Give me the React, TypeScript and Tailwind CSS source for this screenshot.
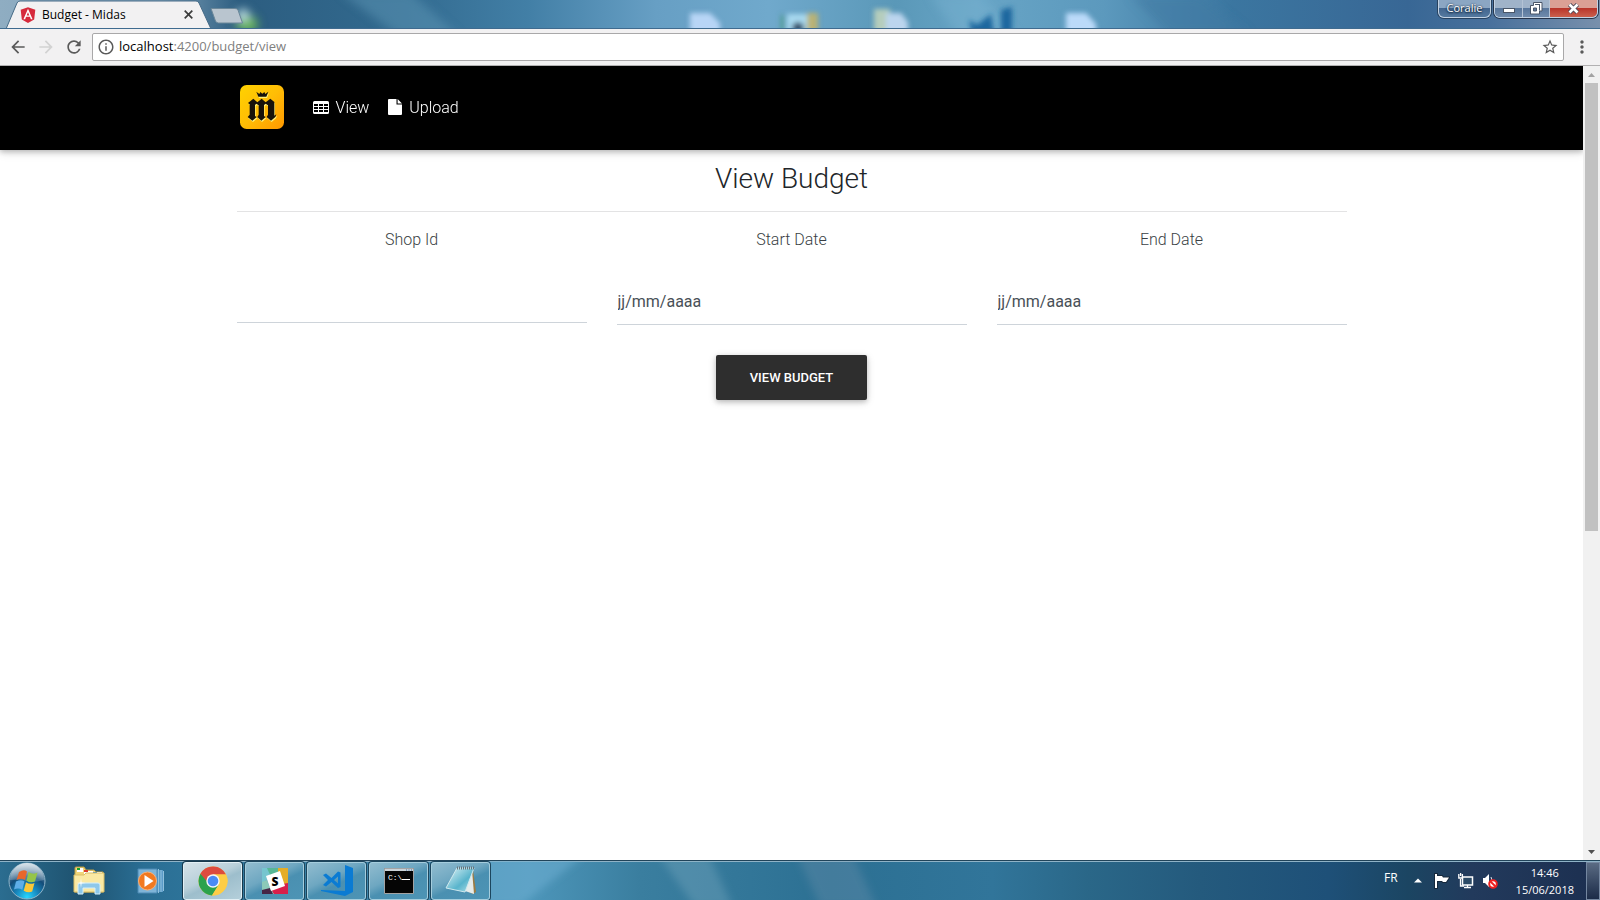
import type { ReactNode } from "react";
import {
  MdArrowBack,
  MdArrowForward,
  MdInfoOutline,
  MdMoreVert,
  MdRefresh,
  MdStarBorder,
} from "react-icons/md";
import { FaAngular } from "react-icons/fa";

const segoe = "font-['Open_Sans','Noto_Sans',sans-serif]";

function DesktopIcons() {
  return (
    <svg
      className="pointer-events-none absolute inset-0 h-full w-full"
      viewBox="0 0 1600 29"
      preserveAspectRatio="xMidYMin slice"
      aria-hidden="true"
    >
      <defs>
        <filter id="soft" x="-20%" y="-60%" width="140%" height="220%">
          <feGaussianBlur stdDeviation="2.4" />
        </filter>
        <filter id="softer" x="-50%" y="-50%" width="200%" height="200%">
          <feGaussianBlur stdDeviation="5" />
        </filter>
      </defs>
      <g filter="url(#softer)">
        <path d="M340 -8l60 45h60L410-8z" fill="#5d95b6" opacity=".5" />
        <path d="M930 -5l28 40h60L980-5z" fill="#7db6d4" opacity=".35" />
        <path d="M1130-5l40 40h80l-50-40z" fill="#3f7ba3" opacity=".6" />
        <ellipse cx="247" cy="24" rx="11" ry="9" fill="#69b45c" />
        <ellipse cx="243" cy="15" rx="6" ry="6" fill="#c9e8ea" />
      </g>
      <g filter="url(#soft)">
        <path d="M690 13h20l10 10v12h-30z" fill="#b8d5f6" />
        <path d="M787 14h20v20h-20z" fill="#a8d9ef" />
        <path d="M807 13h11v20h-11z" fill="#b9b274" />
        <circle cx="798" cy="28" r="6" fill="#39536d" />
        <path d="M781 15h3v18h-3z" fill="#4c9a86" />
        <path d="M874 9h16v25h-16z" fill="#b5cdbc" />
        <path d="M886 13h15l7 9v14h-22z" fill="#bcd5ee" />
        <path d="M1001 10l11-3v27h-11zM969 20l8 5 14-11 3 20h-22z" fill="#1d679f" />
        <path d="M1066 13h20l10 11v12h-30z" fill="#bbdaf9" />
      </g>
    </svg>
  );
}

function TitleBar() {
  return (
    <header
      className={`relative flex h-[29px] shrink-0 items-start overflow-hidden border-b border-[#3f6b8f] bg-[linear-gradient(90deg,#8fadc2_0%,#7d9fb8_10%,#2c5d80_15%,#326a8f_25%,#427fa6_33%,#679fc4_41%,#70a9cc_48%,#5a98b8_56%,#68a5c6_61%,#5c99bd_69%,#3b76a0_77%,#386795_88%,#48709c_93%,#7890ac_100%)] ${segoe}`}
    >
      <DesktopIcons />
      <div className="relative ml-1.5 h-[29px] w-[206px] shrink-0">
        <svg className="absolute inset-0 h-full w-full" viewBox="0 0 206 29" aria-hidden="true">
          <path
            d="M0 29 11 3Q12 1 14 1H190Q192 1 193 3L205 29Z"
            fill="#f2f1f2"
            stroke="#466b87"
            strokeWidth="1"
          />
          <path d="M0 28h206v1H0z" fill="#f2f1f2" />
        </svg>
        <div className="relative flex h-[29px] items-center pl-3.5 pr-4">
          <span className="relative flex h-4 w-4 items-center justify-center">
            <span className="absolute h-2.5 w-2 bg-white" />
            <FaAngular className="relative h-[18px] w-[18px] shrink-0 text-[#d6293b]" />
          </span>
          <span className="ml-1.5 flex-1 text-xs text-black">Budget - Midas</span>
          <button aria-label="Close tab" className="flex h-4 w-4 items-center justify-center">
            <svg width="9" height="9" viewBox="0 0 9 9" aria-hidden="true">
              <path d="M.7.7l7.6 7.6M8.3.7L.7 8.3" stroke="#3c3c3c" strokeWidth="1.7" />
            </svg>
          </button>
        </div>
      </div>
      <button aria-label="New tab" className="relative -ml-0.5 mt-2 h-4 w-[34px]">
        <svg width="34" height="16" viewBox="0 0 34 16" aria-hidden="true">
          <path
            d="M1 .5H25Q27 .5 28 2L32.500 15H8.500Q6.500 15 5.500 13Z"
            fill="#b9c5cf"
            stroke="#6b8799"
          />
        </svg>
      </button>
      <div className="relative ml-auto flex pr-0.5">
        <button className="mr-[3px] flex h-[18px] w-[53px] items-center justify-center rounded-b-md border border-t-0 border-[#c3d2e3] bg-[linear-gradient(#8ba6c3_45%,#43668f_50%,#54799f)] text-[11px] text-white shadow-[0_0_0_1px_#27425f] [text-shadow:0_0_2px_#12263c,0_1px_2px_#12263c]">
          Coralie
        </button>
        <div className="flex h-[18px] overflow-hidden rounded-b-md border border-t-0 border-[#c3d2e3] shadow-[0_0_0_1px_#27354b]">
          <button
            aria-label="Minimize"
            className="flex w-7 items-center justify-center border-r border-[#b4c3d5] bg-[linear-gradient(#a0b3c9_45%,#59779c_50%,#708bac)]"
          >
            <svg width="12" height="6" viewBox="0 0 12 6" className="mt-1" aria-hidden="true">
              <rect x=".5" y=".5" width="11" height="4" fill="#fff" stroke="#4a5668" />
            </svg>
          </button>
          <button
            aria-label="Restore"
            className="flex w-[27px] items-center justify-center border-r border-[#b4c3d5] bg-[linear-gradient(#a0b3c9_45%,#59779c_50%,#708bac)]"
          >
            <svg width="13" height="13" viewBox="0 0 13 13" aria-hidden="true">
              <path d="M3.500.5h8.500v8.500h-2.500v3h-9v-8.500h3z" fill="#fff" stroke="#4a5668" />
              <path d="M5 2.500h5M9.500 2.500v6M3.500 6h3v3h-3z" fill="#60799b" stroke="#4a5668" />
            </svg>
          </button>
          <button
            aria-label="Close"
            className="flex w-[47px] items-center justify-center bg-[linear-gradient(#dba095_45%,#b9362b_50%,#cb604d)]"
          >
            <svg width="13" height="11" viewBox="0 0 13 11" aria-hidden="true">
              <path d="M2.500 1.500l8 8M10.500 1.500l-8 8" stroke="#4f4a58" strokeWidth="4.500" />
              <path d="M2.500 1.500l8 8M10.500 1.500l-8 8" stroke="#fff" strokeWidth="2.600" />
            </svg>
          </button>
        </div>
      </div>
    </header>
  );
}

function AddressBar() {
  return (
    <div
      className={`flex h-[37px] shrink-0 items-center border-b border-[#b2b1b2] bg-[#f2f1f2] pl-2 text-[#5a5a5a] ${segoe}`}
    >
      <button aria-label="Back">
        <MdArrowBack className="h-5 w-5" />
      </button>
      <button aria-label="Forward" disabled className="ml-2 text-[#d2d2d2]">
        <MdArrowForward className="h-5 w-5" />
      </button>
      <button aria-label="Reload" className="ml-2">
        <MdRefresh className="h-5 w-5" />
      </button>
      <div className="ml-2 flex h-7 flex-1 items-center rounded-xs border border-[#a9a8a9] bg-white px-1">
        <MdInfoOutline className="h-[18px] w-[18px] shrink-0" />
        <a href="#url" className="ml-1 flex-1 text-[13px] text-[#808080]">
          <span className="text-black">localhost</span>:4200/budget/view
        </a>
        <button aria-label="Bookmark this page">
          <MdStarBorder className="h-[18px] w-[18px]" />
        </button>
      </div>
      <button aria-label="Menu" className="mx-2">
        <MdMoreVert className="h-5 w-5" />
      </button>
    </div>
  );
}

function Logo() {
  return (
    <svg width="44" height="44" viewBox="0 0 132 132" role="img" aria-label="Midas">
      <defs>
        <linearGradient id="gold" x1="0" y1="0" x2="1" y2="1">
          <stop offset="0" stopColor="#ffd200" />
          <stop offset=".5" stopColor="#ffbd05" />
          <stop offset="1" stopColor="#ff9800" />
        </linearGradient>
        <g id="mark">
          <path d="M49 20l9 7 3-6 6 5 6-5 3 6 9-7-6 15H55z" />
          <path d="M24 54l16-13 12 11 13-11 12 11 14-11 12 10v41l6-4-3 8-13 11-13-11 4-7V61l-7-5-5 4v33l5 3-13 11-12-11 4-7V61l-7-5-4 4v33l5 3-13 11-14-11 6-7V58l-5-4z" />
        </g>
      </defs>
      <rect width="132" height="132" rx="20" fill="url(#gold)" />
      <use href="#mark" fill="#fff27a" transform="translate(2 4)" />
      <use href="#mark" fill="#17120a" />
    </svg>
  );
}

function NavBar() {
  return (
    <nav className="relative shrink-0 bg-black shadow-[0_2px_5px_rgba(0,0,0,0.2),0_2px_10px_rgba(0,0,0,0.14)]">
      <div className="mx-auto flex h-[84px] max-w-[1110px] items-center pl-[3px] text-base font-light text-white">
        <a href="#home" className="-mt-0.5">
          <Logo />
        </a>
        <a href="#view" className="ml-[29px] flex items-center gap-[7px]">
          <svg width="16" height="13" viewBox="0 0 16 13" className="-mt-0.5" aria-hidden="true">
            <path
              fillRule="evenodd"
              fill="#fff"
              d="M1.500 0h13Q16 0 16 1.500v10Q16 13 14.500 13h-13Q0 13 0 11.500v-10Q0 0 1.500 0zM1 3v2h4V3zM6 3v2h4V3zM11 3v2h4V3zM1 6v2h4V6zM6 6v2h4V6zM11 6v2h4V6zM1 9v2h4V9zM6 9v2h4V9zM11 9v2h4V9z"
            />
          </svg>
          View
        </a>
        <a href="#upload" className="ml-[19px] flex items-center gap-[7px]">
          <svg width="14" height="16" viewBox="0 0 14 16" className="-mt-0.5" aria-hidden="true">
            <path fill="#fff" d="M1 0h7.500v5.500H14V15q0 1-1 1H1q-1 0-1-1V1q0-1 1-1zM9.600 0L14 4.400H9.600z" />
          </svg>
          Upload
        </a>
      </div>
    </nav>
  );
}

function Field({ id, label, placeholder }: { id: string; label: string; placeholder?: string }) {
  return (
    <div className="flex flex-col">
      <label htmlFor={id} className="text-center leading-6 text-[#3a3f44]">
        {label}
      </label>
      <input
        id={id}
        type="text"
        placeholder={placeholder}
        className={
          placeholder
            ? "mt-[27px] h-[46px] w-full border-b border-[#ced4da] pl-px font-normal outline-none placeholder:text-[#495057] placeholder:opacity-100"
            : "mt-[27px] h-11 w-full border-b border-[#ced4da] font-normal outline-none"
        }
      />
    </div>
  );
}

function BudgetPage() {
  return (
    <main className="mx-auto w-full max-w-[1110px] text-base font-light text-[#212529]">
      <h1 className="pt-3 pb-4 text-center text-[28px] leading-[33px]">View Budget</h1>
      <hr className="border-[#e3e3e4]" />
      <form className="pt-4" onSubmit={(e) => e.preventDefault()}>
        <div className="grid grid-cols-3 gap-[30px]">
          <Field id="shop" label="Shop Id" />
          <Field id="start" label="Start Date" placeholder="jj/mm/aaaa" />
          <Field id="end" label="End Date" placeholder="jj/mm/aaaa" />
        </div>
        <div className="mt-[30px] flex justify-center">
          <button
            type="submit"
            className="h-[45px] rounded-xs bg-[#2e2e2e] px-[34px] text-[13px] font-medium text-white uppercase shadow-[0_2px_5px_rgba(0,0,0,0.2),0_2px_10px_rgba(0,0,0,0.12)]"
          >
            View Budget
          </button>
        </div>
      </form>
    </main>
  );
}

function ScrollBar() {
  return (
    <div className="flex w-[17px] shrink-0 flex-col items-center bg-[#f1f1f1]" aria-hidden="true">
      <svg width="17" height="17" viewBox="0 0 17 17">
        <path d="M5 11l3.500-4 3.500 4z" fill="#a3a3a3" />
      </svg>
      <div className="flex w-[13px] flex-1 flex-col">
        <div className="h-[59%] bg-[#c1c1c1]" />
      </div>
      <svg width="17" height="17" viewBox="0 0 17 17">
        <path d="M5 7l3.500 4L12 7z" fill="#505050" />
      </svg>
    </div>
  );
}

function StartOrb() {
  return (
    <svg width="38" height="38" viewBox="0 0 38 38" aria-hidden="true">
      <defs>
        <radialGradient id="orb" cx=".5" cy=".95" r=".9">
          <stop offset="0" stopColor="#27d7ff" />
          <stop offset=".35" stopColor="#1787bd" />
          <stop offset=".65" stopColor="#144c78" />
          <stop offset="1" stopColor="#8aa9bf" />
        </radialGradient>
        <linearGradient id="gloss" x1="0" y1="0" x2="0" y2="1">
          <stop offset="0" stopColor="#fff" stopOpacity=".65" />
          <stop offset="1" stopColor="#fff" stopOpacity=".15" />
        </linearGradient>
      </defs>
      <circle cx="19" cy="19" r="18" fill="url(#orb)" stroke="#8fb4c8" />
      <path d="M2 18a17 17 0 0 1 34 0Q27 21 19 19T2 18z" fill="url(#gloss)" />
      <path d="M11 10q5-3 8-.5l-2 8.500q-4-2.500-8.500 0z" fill="#e9672b" />
      <path d="M20.500 10q5 3 9 .5l-2.500 9q-4.500 2-8.500-.8z" fill="#95c54a" />
      <path d="M8 19.500q5-2.500 8.500-.2l-2.200 8.500q-4-2.500-8.300-.3z" fill="#5eaee8" />
      <path d="M18 20.300q4 2.700 8.500.7l-2.300 8.500q-4 2-8.500-.8z" fill="#fbc838" />
    </svg>
  );
}

function ExplorerIcon() {
  return (
    <svg width="32" height="30" viewBox="0 0 32 30" aria-hidden="true">
      <path d="M2 6V2q0-1 1-1h8l2 3h8l2 2h7v20H2z" fill="#f2d67a" stroke="#b99c45" />
      <path d="M4 2h6v4H4zM11 5h9v3h-9zM20 6h9v3h-9z" fill="#fff" />
      <path d="M4 2h3v2H4z" fill="#16a32c" />
      <path d="M11 4h4v2h-4z" fill="#db3d2b" />
      <path d="M20 6h4v2h-4z" fill="#2c8ed8" />
      <path d="M1 9h10l2-2h18v19H1z" fill="#fae9a3" stroke="#d9bd66" />
      <path d="M5 28V19q0-2 2-2h18q2 0 2 2v9h-5v-6H10v6z" fill="#8ec8ea" stroke="#d5effb" />
      <path d="M8 12l.6 4.400 4.400.6-4.400.6L8 22l-.6-4.400L3 17l4.400-.6z" fill="#fff" opacity=".9" />
    </svg>
  );
}

function MediaPlayerIcon() {
  return (
    <svg width="28" height="26" viewBox="0 0 28 26" aria-hidden="true">
      <path d="M20 2h6v22h-6z" fill="#5b9bc8" />
      <path d="M21.500 1v24M24 2v22M26.500 3v20" stroke="#8fc0dd" />
      <path d="M1 1h19v24H1z" fill="#7fb4d8" stroke="#4d8ab4" />
      <circle cx="10.500" cy="13" r="9" fill="#f27920" stroke="#f9b077" />
      <path d="M7.500 7l9 6-9 6z" fill="#fff" />
    </svg>
  );
}

function ChromeIcon() {
  return (
    <svg width="30" height="30" viewBox="0 0 30 30" aria-hidden="true">
      <circle cx="15" cy="15" r="14.500" fill="#fc4" />
      <path d="M15 15L2.440 7.750A14.500 14.500 0 0 0 14 29.460L21 18.500z" fill="#2ba24c" />
      <path d="M15 15H8.500L2.440 7.750A14.500 14.500 0 0 1 27.960 8.500H15z" fill="#dd4b3e" />
      <path d="M15 8.500H27.960A14.500 14.500 0 0 1 14 29.460L21 18z" fill="#fdcd46" />
      <circle cx="15" cy="15" r="6.700" fill="#f4f6f7" />
      <circle cx="15" cy="15" r="5.300" fill="#4a8af4" />
    </svg>
  );
}

function SlackIcon() {
  return (
    <svg width="28" height="28" viewBox="0 0 28 28" aria-hidden="true">
      <path d="M1 1h17l-1 7-9 3-7 4z" fill="#57b795" />
      <path d="M1 1h5l4 9-9 6z" fill="#76c5cf" />
      <path d="M17 1h10v16l-6 1-4-10z" fill="#e4ad27" />
      <path d="M27 16v11H12l-2-6 11-4z" fill="#d8204b" />
      <path d="M1 15l5-2 3 8 4 6H1z" fill="#8cc9b8" />
      <path d="M1 23l8-2 3 6H1z" fill="#462647" />
      <path d="M5 9l14-5 5 15-14 5z" fill="#fff" />
      <text x="14" y="18.500" textAnchor="middle" fontSize="12" fontWeight="800" className="font-['Open_Sans',sans-serif]">
        S
      </text>
    </svg>
  );
}

function CodeIcon() {
  return (
    <svg width="34" height="33" viewBox="0 0 34 33" aria-hidden="true">
      <path d="M25 1l8 3v24l-8 4L1 27v-1l24 1z" fill="#0a7bd3" />
      <path
        d="M3 11l3-1.500 5.500 4.500 6.500-6.500 2.500 1V23l-2.500 1-6.500-6-5.500 4.500-3-1.500 5-5zM18 12.500L14 16l4 3.500z"
        fill="#0a7bd3"
        fillRule="evenodd"
      />
    </svg>
  );
}

function TerminalIcon() {
  return (
    <svg width="30" height="26" viewBox="0 0 30 26" aria-hidden="true">
      <path d="M.5.5h29v25H.5z" fill="#050505" stroke="#a3a3a3" />
      <path d="M1 1h28v2H1z" fill="#cbd2d6" />
      <path d="M22 2h1M24.500 2h1M27 2h1" stroke="#3b6a9c" />
      <text x="4" y="12" fontSize="8" fill="#fff" className="font-['Liberation_Mono',monospace]">
        C:\
      </text>
      <path d="M18 11.500h8" stroke="#fff" />
    </svg>
  );
}

function NotepadIcon() {
  return (
    <svg width="32" height="30" viewBox="0 0 32 30" aria-hidden="true">
      <defs>
        <linearGradient id="paper" x1="0" y1="0" x2="1" y2="1">
          <stop offset="0" stopColor="#e4f6f8" />
          <stop offset=".6" stopColor="#58b4cc" />
          <stop offset="1" stopColor="#b9e3ea" />
        </linearGradient>
      </defs>
      <path d="M28 4l3 22-3 2-6-3z" fill="#9b7b43" />
      <path d="M27 4l2 24-9-3z" fill="#e6eceb" />
      <path d="M12 2h17l-9 24L1 22z" fill="url(#paper)" stroke="#cfe9ee" />
      <path d="M12 2h17" stroke="#66747a" strokeWidth="3" strokeDasharray="1 1" />
    </svg>
  );
}

function TaskButton({ label, active, children }: { label: string; active?: boolean; children: ReactNode }) {
  return (
    <button
      aria-label={label}
      className={
        active
          ? "flex h-[38px] w-[59px] items-center justify-center rounded-[3px] border border-[#e2eff4] bg-[linear-gradient(155deg,#d4e2e8_0%,#b9d0da_42%,#9dbecc_56%,#b4cfda)] shadow-[0_0_0_1px_#17394d]"
          : "flex h-[38px] w-[59px] items-center justify-center rounded-[3px] border border-[#a5cddd] bg-[linear-gradient(155deg,#91bccf_0%,#6ea7c1_40%,#4a90b1_56%,#4d94b5)] shadow-[0_0_0_1px_#1c465e]"
      }
    >
      {children}
    </button>
  );
}

function TrayIcons() {
  return (
    <>
      <svg width="8" height="5" viewBox="0 0 8 5" className="ml-4" aria-hidden="true">
        <path d="M0 4.500L4 .5l4 4z" fill="#fff" />
      </svg>
      <svg width="16" height="16" viewBox="0 0 16 16" className="ml-3" aria-hidden="true">
        <path d="M1 1h2v14H1zM3 3h5l1 1.500h6L12 9H9L8 8H3z" fill="#fff" stroke="#16283b" strokeWidth="2" />
        <path d="M1 1h2v14H1zM3 3h5l1 1.500h6L12 9H9L8 8H3z" fill="#fff" />
      </svg>
      <svg width="16" height="16" viewBox="0 0 16 16" className="ml-2" aria-hidden="true">
        <path d="M4.500 4h10v8h-10z" fill="#2b4a66" stroke="#fff" strokeWidth="1.500" />
        <path
          d="M6 14.500h7M9.500 12v2.500M2.500 6v7H6M.8 1v4h3.600V1M2.600 0v3"
          fill="none"
          stroke="#fff"
          strokeWidth="1.300"
        />
      </svg>
      <svg width="16" height="16" viewBox="0 0 16 16" className="ml-2" aria-hidden="true">
        <path d="M1 5h2l4-4v13l-4-4H1z" fill="#fff" />
        <path d="M9 4q2 3 0 7" fill="none" stroke="#dbe4ee" />
        <circle cx="11" cy="11" r="3.800" fill="#fff" stroke="#f02020" strokeWidth="2" />
        <path d="M8.500 8.500l5 5" stroke="#f02020" strokeWidth="2" />
      </svg>
    </>
  );
}

function TaskBar() {
  return (
    <footer
      className={`relative flex h-10 shrink-0 items-center overflow-hidden border-t border-[#21445a] bg-[linear-gradient(90deg,#2b6d90_0%,#1e526f_5%,#2a6e94_9%,#30789d_14%,#4089ae_25%,#4d96ba_33%,#3a7e9f_40%,#2c7093_52%,#31759a_62%,#2a6788_68%,#245a7d_75%,#1e5078_83%,#1b4562_88%,#223a5c_92%,#1c2f50_100%)] text-white shadow-[inset_0_1px_0_#8fb3c7] ${segoe}`}
    >
      <svg
        className="pointer-events-none absolute inset-0 h-full w-full"
        viewBox="0 0 1600 40"
        preserveAspectRatio="none"
        aria-hidden="true"
      >
        <defs>
          <filter id="glass" x="-20%" y="-20%" width="140%" height="140%">
            <feGaussianBlur stdDeviation="4" />
          </filter>
        </defs>
        <g filter="url(#glass)">
          <path d="M480-4h102l-62 50h-40z" fill="#6fb2d4" opacity=".5" />
          <path d="M660-4h50l22 50h-38z" fill="#8bb6cb" opacity=".3" />
          <path d="M798-4h56l22 50h-56z" fill="#7d9bb5" opacity=".28" />
        </g>
      </svg>
      <button aria-label="Start" className="relative ml-2">
        <StartOrb />
      </button>
      <button aria-label="Explorer" className="relative ml-[27px]">
        <ExplorerIcon />
      </button>
      <button aria-label="Media player" className="relative ml-8">
        <MediaPlayerIcon />
      </button>
      <div className="relative ml-[18px] flex gap-[3px]">
        <TaskButton label="Chrome" active>
          <ChromeIcon />
        </TaskButton>
        <TaskButton label="Slack">
          <SlackIcon />
        </TaskButton>
        <TaskButton label="Visual Studio Code">
          <CodeIcon />
        </TaskButton>
        <TaskButton label="Command prompt">
          <TerminalIcon />
        </TaskButton>
        <TaskButton label="Notepad">
          <NotepadIcon />
        </TaskButton>
      </div>
      <div className="relative ml-auto flex items-center">
        <span className="mb-1.5 text-xs">FR</span>
        <TrayIcons />
        <div className="ml-[18px] text-center text-[11px] leading-[17px]">
          <div>14:46</div>
          <div>15/06/2018</div>
        </div>
        <button
          aria-label="Show desktop"
          className="ml-3 h-[38px] w-3.5 border border-[#7487a0] bg-linear-to-b from-[#5a6b83] to-[#1c2c48]"
        />
      </div>
    </footer>
  );
}

export default function App() {
  return (
    <div className="flex h-screen flex-col bg-white font-['Roboto',sans-serif]">
      <TitleBar />
      <AddressBar />
      <div className="flex min-h-0 flex-1">
        <div className="flex min-w-0 flex-1 flex-col overflow-y-auto">
          <NavBar />
          <BudgetPage />
        </div>
        <ScrollBar />
      </div>
      <TaskBar />
    </div>
  );
}
